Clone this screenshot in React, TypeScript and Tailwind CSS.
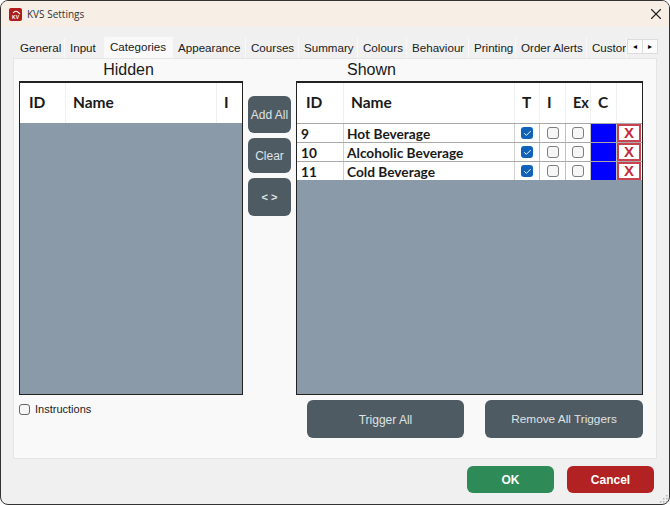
import { Check, X } from 'lucide-react';

const TABS = [
  { label: 'General', w: 'w-[50px]' },
  { label: 'Input', w: 'w-[40px]' },
  { label: 'Categories', w: 'w-[68px]', active: true },
  { label: 'Appearance', w: 'w-[73px]' },
  { label: 'Courses', w: 'w-[53px]' },
  { label: 'Summary', w: 'w-[59px]' },
  { label: 'Colours', w: 'w-[49px]' },
  { label: 'Behaviour', w: 'w-[62px]' },
  { label: 'Printing', w: 'w-[47px]' },
  { label: 'Order Alerts', w: 'w-[71px]' },
  { label: 'Customer', w: 'w-[40px]' },
];

const ROWS = [
  { id: '9', name: 'Hot Beverage' },
  { id: '10', name: 'Alcoholic Beverage' },
  { id: '11', name: 'Cold Beverage' },
];

function SideButton({ label, h }: { label: string; h: string }) {
  return (
    <button className={`${h} w-[43px] rounded-md bg-[#4f5b62] text-[12px] text-[#dfe3e5]`}>
      {label}
    </button>
  );
}

function Box({ checked }: { checked?: boolean }) {
  return checked ? (
    <span className="flex h-[12px] w-[12px] items-center justify-center rounded-[3px] bg-[#0f62b8]">
      <Check size={9} strokeWidth={2.5} className="text-white" />
    </span>
  ) : (
    <span className="h-[12px] w-[12px] rounded-[3px] border border-[#7d7d7d] bg-[#f6f6f6]" />
  );
}

export default function App() {
  return (
    <div className="relative flex h-[505px] w-[670px] flex-col overflow-hidden rounded-lg border border-[#333] bg-[#f0f0f0] font-['Liberation_Sans',sans-serif] text-[#1a1a1a]">
      {/* Title bar */}
      <div className="flex h-[26px] shrink-0 items-center bg-[#f7efe6] pl-[8px] pr-[4.5px]">
        <div className="relative flex h-[13px] w-[13px] items-end justify-center rounded-[2px] bg-[#b01c1c] pb-[1px] text-[5px] font-bold leading-[6px] text-white">
          <svg viewBox="0 0 13 13" className="absolute inset-0 h-[13px] w-[13px]">
            <path d="M4 5 C6 2.5 8 2.5 11 6" fill="none" stroke="#fff" strokeWidth="1.2" />
          </svg>
          KV
        </div>
        <span className="ml-[5px] font-['Open_Sans',sans-serif] text-[10px] text-[#333]">KVS Settings</span>
        <X size={18} strokeWidth={1.5} className="ml-auto text-[#222]" />
      </div>

      {/* Tabs */}
      <div className="ml-[14px] mt-[10px] flex h-[21px] w-[643px] shrink-0 items-end">
        <div className="flex w-[612px] items-end overflow-hidden">
          {TABS.map((tab) => (
            <div
              key={tab.label}
              className={`flex shrink-0 items-center overflow-hidden whitespace-nowrap border-r border-[#f9f9f9] pl-[5px] text-[11.6px] ${tab.w} ${
                tab.active ? 'h-[21px] bg-[#f9f9f9] pb-[2px]' : 'h-[20px] bg-[#f0f0f0]'
              }`}
            >
              {tab.label}
            </div>
          ))}
        </div>
        <div className="mb-[4px] flex h-[15px] w-[31px] shrink-0 border border-[#dcdcdc] bg-[#fbfbfb]">
          <span className="flex w-1/2 items-center justify-center border-r border-[#dcdcdc] text-[8px] text-black">◂</span>
          <span className="flex w-1/2 items-center justify-center text-[8px] text-black">▸</span>
        </div>
      </div>

      {/* Panel */}
      <div className="ml-[12px] flex h-[401px] w-[644px] shrink-0 flex-col border border-[#e5e5e5] bg-[#f9f9f9] pl-[5px]">
        <div className="flex gap-[5px]">
          {/* Hidden list */}
          <div className="flex w-[224px] flex-col">
            <div className="flex h-[22px] items-center justify-center pb-[1px] pr-[5px] text-[16px]">Hidden</div>
            <div className="flex h-[314px] flex-col border border-t-2 border-[#222] bg-[#8a9aa8]">
              <div className="flex h-[40px] items-center bg-white font-['Lato',sans-serif] text-[15.5px] font-bold">
                <span className="flex h-full w-[46px] items-center border-r border-[#f0f0f0] pl-[9px]">ID</span>
                <span className="flex h-full w-[151px] items-center border-r border-[#f0f0f0] pl-[7px]">Name</span>
                <span className="flex h-full items-center pl-[7px]">I</span>
              </div>
            </div>
            <label className="mt-[6px] flex items-center gap-[5px] text-[11px]">
              <span className="h-[11px] w-[11px] rounded-[3px] border border-[#666] bg-[#f6f6f6]" />
              Instructions
            </label>
          </div>

          {/* Move buttons */}
          <div className="flex w-[43px] flex-col gap-[5px] pt-[37px]">
            <SideButton label="Add All" h="h-[37px]" />
            <SideButton label="Clear" h="h-[35px]" />
            <button className="h-[38px] w-[43px] rounded-md bg-[#4f5b62] text-[11px] font-bold text-[#dfe3e5]">
              {'< >'}
            </button>
          </div>

          {/* Shown list */}
          <div className="flex w-[347px] flex-col">
            <div className="flex h-[22px] items-center pb-[1px] pl-[51px] text-[16px]">Shown</div>
            <div className="flex h-[314px] flex-col border border-t-2 border-[#222] bg-[#8a9aa8]">
              <div className="flex h-[40px] shrink-0 items-center bg-white font-['Lato',sans-serif] text-[15.5px] font-bold">
                <span className="flex h-full w-[47px] items-center border-r border-[#f0f0f0] pl-[9px]">ID</span>
                <span className="flex h-full w-[171px] items-center border-r border-[#f0f0f0] pl-[7px]">Name</span>
                <span className="flex h-full w-[25px] items-center border-r border-[#f0f0f0] pl-[7px]">T</span>
                <span className="flex h-full w-[26px] items-center border-r border-[#f0f0f0] pl-[7px]">I</span>
                <span className="flex h-full w-[25px] items-center border-r border-[#f0f0f0] pl-[7px] text-[14.5px]">Ex</span>
                <span className="flex h-full w-[26px] items-center border-r border-[#f0f0f0] pl-[7px]">C</span>
              </div>
              {ROWS.map((row) => (
                <div
                  key={row.id}
                  className="flex h-[19px] shrink-0 items-stretch border-t border-[#a9a9a9] bg-white font-['Lato',sans-serif] text-[13.7px] font-bold leading-[20px]"
                >
                  <span className="w-[47px] overflow-hidden border-r border-[#d0d0d0] pl-[4px]">{row.id}</span>
                  <span className="w-[171px] overflow-hidden border-r border-[#d0d0d0] pl-[3px]">{row.name}</span>
                  <span className="flex w-[25px] items-center justify-center border-r border-[#c0c0c0]">
                    <Box checked />
                  </span>
                  <span className="flex w-[26px] items-center justify-center border-r border-[#c0c0c0]">
                    <Box />
                  </span>
                  <span className="flex w-[25px] items-center justify-center border-r border-[#c0c0c0]">
                    <Box />
                  </span>
                  <span className="w-[26px] border-r border-[#c0c0c0] bg-[#0000ff]" />
                  <span className="flex w-[24px] items-center justify-center border-2 border-[#c8424f] bg-white pb-[1px] font-['Liberation_Sans',sans-serif] text-[15px] font-bold leading-none text-[#c42b3a]">
                    X
                  </span>
                </div>
              ))}
            </div>
            <div className="mt-[5px] flex gap-[21px] pl-[11px]">
              <button className="h-[38px] w-[157px] rounded-md bg-[#4f5b62] pt-[1px] text-[12px] text-[#dfe3e5]">Trigger All</button>
              <button className="h-[38px] w-[158px] rounded-md bg-[#4f5b62] pt-[2px] text-[11.8px] text-[#dfe3e5]">
                Remove All Triggers
              </button>
            </div>
          </div>
        </div>
      </div>

      {/* Footer */}
      <div className="mr-[15px] mt-[7px] flex justify-end gap-[13px]">
        <button className="h-[27px] w-[87px] rounded-md bg-[#2e8b57] text-[12px] font-bold text-white">OK</button>
        <button className="h-[27px] w-[87px] rounded-md bg-[#b22222] text-[12px] font-bold text-white">Cancel</button>
      </div>

      {/* Resize grip */}
      <svg viewBox="0 0 8 8" className="absolute bottom-[1px] right-[1px] h-[8px] w-[8px]">
        <g fill="#b5b5b5">
          <rect x="6" y="0" width="1.5" height="1.5" />
          <rect x="3" y="3" width="1.5" height="1.5" />
          <rect x="6" y="3" width="1.5" height="1.5" />
          <rect x="0" y="6" width="1.5" height="1.5" />
          <rect x="3" y="6" width="1.5" height="1.5" />
          <rect x="6" y="6" width="1.5" height="1.5" />
        </g>
      </svg>
    </div>
  );
}
